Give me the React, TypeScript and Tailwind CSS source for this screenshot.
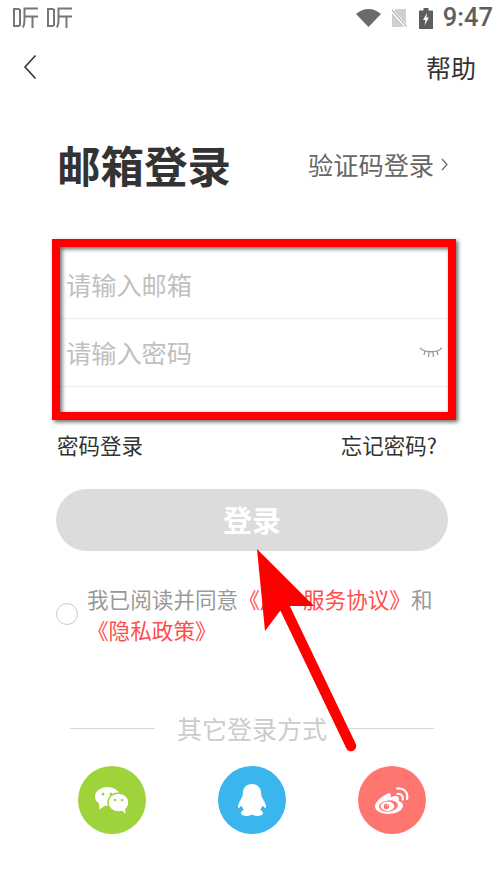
const cjk = "font-['Noto_Sans_CJK_SC','Noto_Sans',sans-serif]";

function AppGlyph() {
  return (
    <svg width="25" height="21" viewBox="0 0 25 21" fill="none" stroke="#777" strokeWidth="2">
      <path d="M6.500 2H1v17h5.500M7 2v17" />
      <path d="M25 1.500H11.500V13C11.500 16 11 18.500 10 20.500M11.500 9.500H25M19.500 9.500V21" />
    </svg>
  );
}
function Wifi() {
  return (
    <svg width="25" height="18" viewBox="0 0 25 18">
      <path d="M0 5C3.500 2 7.500 0 12.500 0S21.500 2 25 5L12.500 18z" fill="#6b6b6b" />
    </svg>
  );
}
function NoSim() {
  return (
    <svg width="16" height="18" viewBox="0 0 16 18">
      <path d="M5 0h10v18H1V4z" fill="#cfcfcf" />
      <path d="M0 0.500L16 18.500" stroke="#fff" strokeWidth="3" />
      <path d="M1 1L15.500 17.500" stroke="#8e8e8e" strokeWidth="1" />
    </svg>
  );
}
function Battery() {
  return (
    <svg width="14" height="21" viewBox="0 0 14 21">
      <path d="M4.500 0h5v2.500H14V21H0V2.500h4.500z" fill="#5e5e5e" />
      <path d="M8 5L4 12h2.500L5.500 17.500l4.500-8H7.500z" fill="#fff" />
    </svg>
  );
}
function Eye() {
  return (
    <svg width="22" height="11" viewBox="0 0 22 11" fill="none" stroke="#999" strokeWidth="1.300">
      <path d="M1.500 2.500C7 5.500 15 5.500 20.500 2.500M1.500 2.500L0.500 0.500M20.500 2.500L21.500 0.500M5 4.200L4 8M9 5L8.500 10M13 5L13.500 10M17 4.200L18 8" />
    </svg>
  );
}
function WeChat() {
  return (
    <svg width="34" height="27" viewBox="0 0 34 27">
      <ellipse cx="12.500" cy="9.500" rx="12.500" ry="9.500" fill="#fff" />
      <path d="M4 15L4.500 22.500L11 18z" fill="#fff" />
      <ellipse cx="23.500" cy="15.500" rx="10.500" ry="9.500" fill="#fff" stroke="#9fd33b" strokeWidth="1.400" />
      <path d="M27 23L30.500 27L30 21z" fill="#fff" />
      <circle cx="8" cy="7" r="1.500" fill="#9fd33b" />
      <circle cx="16" cy="7" r="1.500" fill="#9fd33b" />
      <circle cx="20" cy="13" r="1.300" fill="#9fd33b" />
      <circle cx="27" cy="13" r="1.300" fill="#9fd33b" />
    </svg>
  );
}
function QQ() {
  return (
    <svg width="28" height="32" viewBox="0 0 28 32">
      <path d="M14 0C7.500 0 4.800 4.500 4.800 10c0 1.500-.8 3-1.500 4.500C1.500 17.500.3 20 0 22.500c-.2 1.500.8 1.800 1.600 1l1.900-2c.5 1.800 1.300 3.200 2.400 4.300C3.800 26.800 3 28 3 29.300 3 31.200 6 32 8.800 32c2.300 0 4-.6 5.200-1.400 1.200.8 2.900 1.400 5.200 1.400 2.800 0 5.800-.8 5.800-2.700 0-1.300-.8-2.500-2.900-3.500 1.100-1.100 1.900-2.500 2.400-4.300l1.900 2c.8.8 1.800.5 1.600-1-.3-2.500-1.500-5-3.300-8-.7-1.500-1.500-3-1.500-4.500C23.200 4.500 20.500 0 14 0z" fill="#fff" />
    </svg>
  );
}
function Weibo() {
  return (
    <svg width="35" height="27" viewBox="0 0 35 27">
      <path d="M13 6.500C7.500 8.500 0 14.500 0 19.500 0 24 6.500 27 13.500 27c8 0 14.500-3.700 14.500-8.500 0-2.800-2.500-4-4.500-4.500.7-1.800.8-3.200-.3-4.300-1.800-1.400-5.300-.5-7.700.9.900-3.100 0-4.900-2.500-4.100z" fill="#fff" />
      <ellipse cx="13.500" cy="19" rx="9.500" ry="5.600" fill="#ff7570" transform="rotate(-6 13.500 19)" />
      <ellipse cx="12.500" cy="19.200" rx="6.800" ry="4.700" fill="#fff" />
      <circle cx="11.500" cy="19.500" r="2.700" fill="#ff7570" />
      <circle cx="12.500" cy="18.500" r="0.800" fill="#fff" />
      <path d="M22.500 7c3.500-.8 6 2 5.200 5.500M22 1.500c6.500-1.200 11.500 4 10 10.500" fill="none" stroke="#fff" strokeWidth="2.200" strokeLinecap="round" />
    </svg>
  );
}

export default function App() {
  return (
    <div className={`${cjk} relative w-[504px] h-[896px] bg-white overflow-hidden flex flex-col`}>
      {/* status bar */}
      <div className="h-[36px] flex items-center justify-between pl-[13px] pr-[11px]">
        <div className="flex gap-[9px] pb-[2px]">
          <AppGlyph />
          <AppGlyph />
        </div>
        <div className="flex items-center">
          <Wifi />
          <span className="ml-[10px]"><NoSim /></span>
          <span className="ml-[12px]"><Battery /></span>
          <span className="ml-[10px] text-[25.500px] leading-none text-[#5e5e5e] font-medium font-['Roboto',sans-serif]">9:47</span>
        </div>
      </div>

      {/* nav */}
      <div className="h-[64px] flex items-center justify-between pl-[23px] pr-[28px] pb-[2px]">
        <svg width="14" height="26" viewBox="0 0 14 26" fill="none" stroke="#333" strokeWidth="1.600">
          <path d="M12.500 1.500L2 13l10.500 11.500" />
        </svg>
        <span className="text-[25px] leading-none text-[#333333]">帮助</span>
      </div>

      {/* title */}
      <div className="mt-[36px] h-[58px] pl-[57px] pr-[56px] flex items-center justify-between">
        <span className="text-[43.500px] leading-none font-bold text-[#333333]">邮箱登录</span>
        <span className="flex items-center text-[25.200px] leading-none text-[#666666]">
          验证码登录
          <svg className="ml-[7px]" width="7" height="13" viewBox="0 0 7 13" fill="none" stroke="#666" strokeWidth="1.200">
            <path d="M1 1l5 5.500L1 12" />
          </svg>
        </span>
      </div>

      {/* inputs */}
      <div className="mt-[55px] ml-[58px] mr-[56px]">
        <div className="h-[70px] flex items-center pl-[8px] pt-[2px] border-b border-[#eeeeee] text-[25.200px] text-[#c0c0c0]">请输入邮箱</div>
        <div className="h-[68px] flex items-center justify-between pl-[8px] pr-[6px] border-b border-[#eeeeee] text-[25.200px] text-[#c0c0c0]">
          请输入密码
          <Eye />
        </div>
      </div>

      <div className="mt-[44px] ml-[57px] mr-[67px] flex justify-between text-[21.500px] leading-[28px] text-[#333333]">
        <span>密码登录</span>
        <span>忘记密码?</span>
      </div>

      {/* button */}
      <div className="mt-[30px] ml-[56px] mr-[56px] h-[62px] rounded-full bg-[#dcdcdc] flex items-center justify-center text-[29px] font-bold text-white">登录</div>

      {/* agreement */}
      <div className="mt-[32px] ml-[56px] mr-[56px] flex items-center">
        <div className="w-[22px] h-[22px] rounded-full border-[1.500px] border-[#cccccc] shrink-0" />
        <p className="ml-[9px] text-[21.600px] leading-[31px] text-[#999999]">
          我已阅读并同意
          <span className="text-[#ff4d4d]">《用户服务协议》</span>和
          <br />
          <span className="text-[#ff4d4d]">《隐私政策》</span>
        </p>
      </div>

      {/* divider */}
      <div className="mt-[68px] mx-[70px] flex items-center justify-between">
        <div className="w-[85px] h-px bg-[#d8d8d8]" />
        <span className="text-[25px] leading-[30px] text-[#cccccc]">其它登录方式</span>
        <div className="w-[85px] h-px bg-[#d8d8d8]" />
      </div>

      {/* socials */}
      <div className="mt-[23px] ml-[78px] mr-[78px] flex justify-between">
        <div className="w-[68px] h-[68px] rounded-full bg-[#9fd33b] flex items-center justify-center"><WeChat /></div>
        <div className="w-[68px] h-[68px] rounded-full bg-[#3bb5ed] flex items-center justify-center"><QQ /></div>
        <div className="w-[68px] h-[68px] rounded-full bg-[#ff7570] flex items-center justify-center"><Weibo /></div>
      </div>

      {/* annotation: red box */}
      <div className="absolute left-[52px] top-[239px] w-[404px] h-[181px] border-[8px] border-[#ff0000] shadow-[2px_2px_4px_rgba(0,0,0,0.6),inset_2px_2px_4px_rgba(0,0,0,0.6)]" />

      {/* annotation: arrow */}
      <svg className="absolute left-0 top-0" width="504" height="896" viewBox="0 0 504 896">
        <polygon points="257,549 314,606 289,606 280,611 265,631" fill="#ff0000" />
        <path d="M284 606L351 746" stroke="#ff0000" strokeWidth="10.500" strokeLinecap="round" />
      </svg>
    </div>
  );
}
